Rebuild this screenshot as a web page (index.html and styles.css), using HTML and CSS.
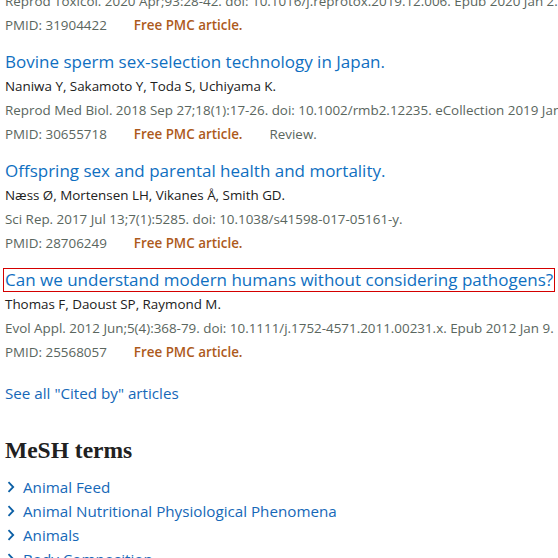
FILE: index.html
```html
<!DOCTYPE html>
<html lang="en">
<head>
<meta charset="utf-8">
<title>Cited by</title>
<link rel="stylesheet" href="styles.css">
</head>
<body>
<div class="page">
  <ul class="docsums">
    <li class="docsum first">
      <div class="citation">Reprod Toxicol. 2020 Apr;93:28-42. doi: 10.1016/j.reprotox.2019.12.006. Epub 2020 Jan 2.</div>
      <div class="meta"><span class="pmid">PMID: 31904422</span><span class="free">Free PMC article.</span></div>
    </li>
    <li class="docsum">
      <a class="title" href="#">Bovine sperm sex-selection technology in Japan.</a>
      <div class="authors">Naniwa Y, Sakamoto Y, Toda S, Uchiyama K.</div>
      <div class="citation">Reprod Med Biol. 2018 Sep 27;18(1):17-26. doi: 10.1002/rmb2.12235. eCollection 2019 Jan.</div>
      <div class="meta"><span class="pmid">PMID: 30655718</span><span class="free">Free PMC article.</span><span class="pubtype">Review.</span></div>
    </li>
    <li class="docsum">
      <a class="title" href="#">Offspring sex and parental health and mortality.</a>
      <div class="authors">Næss Ø, Mortensen LH, Vikanes Å, Smith GD.</div>
      <div class="citation">Sci Rep. 2017 Jul 13;7(1):5285. doi: 10.1038/s41598-017-05161-y.</div>
      <div class="meta"><span class="pmid">PMID: 28706249</span><span class="free">Free PMC article.</span></div>
    </li>
    <li class="docsum">
      <a class="title focused" href="#">Can we understand modern humans without considering pathogens?</a>
      <div class="authors">Thomas F, Daoust SP, Raymond M.</div>
      <div class="citation">Evol Appl. 2012 Jun;5(4):368-79. doi: 10.1111/j.1752-4571.2011.00231.x. Epub 2012 Jan 9.</div>
      <div class="meta"><span class="pmid">PMID: 25568057</span><span class="free">Free PMC article.</span></div>
    </li>
  </ul>
  <a class="see-all" href="#">See all "Cited by" articles</a>
  <h2 class="heading">MeSH terms</h2>
  <ul class="mesh">
    <li><svg class="chev" width="8" height="12" viewBox="0 0 8 12"><path d="M1.5 1.2 L6.2 6 L1.5 10.8" fill="none" stroke="#0b5fa5" stroke-width="1.8"/></svg><a href="#">Animal Feed</a></li>
    <li><svg class="chev" width="8" height="12" viewBox="0 0 8 12"><path d="M1.5 1.2 L6.2 6 L1.5 10.8" fill="none" stroke="#0b5fa5" stroke-width="1.8"/></svg><a href="#">Animal Nutritional Physiological Phenomena</a></li>
    <li><svg class="chev" width="8" height="12" viewBox="0 0 8 12"><path d="M1.5 1.2 L6.2 6 L1.5 10.8" fill="none" stroke="#0b5fa5" stroke-width="1.8"/></svg><a href="#">Animals</a></li>
    <li><svg class="chev" width="8" height="12" viewBox="0 0 8 12"><path d="M1.5 1.2 L6.2 6 L1.5 10.8" fill="none" stroke="#0b5fa5" stroke-width="1.8"/></svg><a href="#">Body Composition</a></li>
  </ul>
</div>
</body>
</html>
```

FILE: styles.css
```css
html, body {
  margin: 0;
  padding: 0;
  background: #ffffff;
  overflow: hidden;
}
body {
  font-family: "Open Sans", "Noto Sans", sans-serif;
  color: #212121;
}
.page {
  margin-top: -11px;
  padding-left: 5px;
  width: 700px;
}
.docsums {
  list-style: none;
  margin: 0;
  padding: 0;
}
.docsum {
  margin-bottom: 13px;
}
.title {
  display: inline-block;
  font-size: 17px;
  line-height: 22px;
  margin: 1px 0;
  color: #0f6fc1;
  text-decoration: none;
  white-space: nowrap;
}
.title.focused {
  outline: 1px solid #d40000;
  outline-offset: 0;
  padding: 0 1px;
  margin-left: -1px;
}
.authors, .citation, .meta {
  font-size: 13.4px;
  line-height: 24px;
  white-space: nowrap;
}
.authors { color: #212121; }
.citation { color: #5a665e; }
.meta {
  display: flex;
  gap: 27px;
  color: #5a665e;
}
.free {
  color: #ad5a1c;
  font-weight: 600;
}
.see-all {
  display: block;
  margin-top: 17px;
  font-size: 15.2px;
  line-height: 24px;
  color: #1668b8;
  text-decoration: none;
}
.heading {
  font-family: "Liberation Serif", "DejaVu Serif", serif;
  font-weight: bold;
  font-size: 23.5px;
  line-height: 30px;
  margin: 30px 0 0 0;
  color: #212121;
}
.mesh {
  list-style: none;
  margin: 10px 0 0 0;
  padding: 0;
}
.mesh li {
  display: flex;
  align-items: center;
  height: 24px;
  font-size: 15.2px;
}
.chev {
  margin-left: 2px;
  margin-right: 8px;
}
.mesh a {
  color: #1668b8;
  text-decoration: none;
}
```
